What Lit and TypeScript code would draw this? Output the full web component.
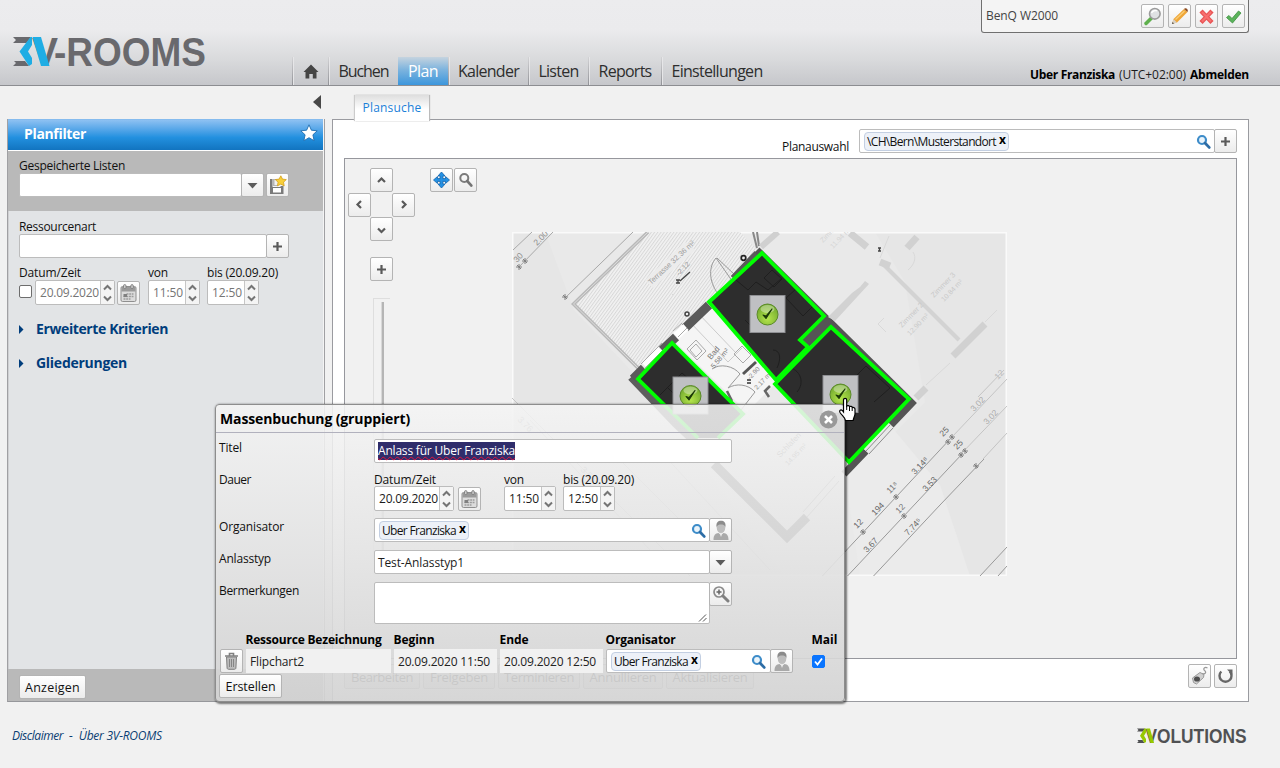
import { LitElement, html, css, svg } from "lit";
import { customElement, property } from "lit/decorators.js";

/** Text run that is tracked so that it fills exactly `w` pixels. */
@customElement("fit-text")
class FitText extends LitElement {
  @property({ type: Number }) w = 0;
  @property() text = "";
  static styles = css`
    :host { display: inline-block; white-space: pre; }
  `;
  updated() {
    const el = this.renderRoot.querySelector("span") as HTMLElement;
    el.style.letterSpacing = "0px";
    const natural = el.getBoundingClientRect().width;
    if (this.w && this.text.length) {
      el.style.letterSpacing = `${(this.w - natural) / this.text.length}px`;
    }
  }
  render() {
    return html`<span>${this.text}</span>`;
  }
}

const t = (text: string, w: number) => html`<fit-text .text=${text} .w=${w}></fit-text>`;

const icon = (w: number, h: number, body: unknown) =>
  html`<svg class="ic" width=${w} height=${h} viewBox="0 0 ${w} ${h}" fill="none">${body}</svg>`;

const plus = icon(11, 11, svg`<path d="M5.5 1v9M1 5.500h9" stroke="#5a5a5a" stroke-width="2.200"/>`);
const caret = icon(11, 7, svg`<path d="M0.500 1h10l-5 5.500z" fill="#5c5c5c"/>`);
const blueSearch = icon(15, 15, svg`
  <circle cx="6" cy="6" r="4" stroke="#3d8cc9" stroke-width="2.200" fill="#eaf4fb"/>
  <path d="M9 9l4.200 4.400" stroke="#2d6da6" stroke-width="2.800" stroke-linecap="round"/>`);
const greySearch = icon(16, 16, svg`
  <circle cx="6.300" cy="6" r="4" stroke="#7c7c7c" stroke-width="2"/>
  <path d="M9.200 9l4.200 4.600" stroke="#747474" stroke-width="2.600" stroke-linecap="round"/>`);
const person = icon(18, 20, svg`
  <path d="M1.500 20c0-5 2-6.500 5-7l2.500 2 2.500-2c3 .5 5 2 5 7z" fill="#a9a9a9"/>
  <path d="M7 12h4l-2 5z" fill="#e9e9e9"/>
  <ellipse cx="9" cy="7.500" rx="4.300" ry="5.500" fill="#bdbdbd"/>
  <path d="M4.500 7C4 2.500 6 .8 9 .8s5 1.700 4.500 6.200C12.500 4.800 11 4.500 9 4.500S5.500 5 4.500 7z" fill="#8b8b8b"/>`);
const calendar = icon(17, 18, svg`
  <rect x="1" y="2.500" width="15" height="15" rx="1.500" fill="#dcdcdc" stroke="#8f8f8f"/>
  <path d="M1.500 3h14v4.500h-14z" fill="#9a9a9a"/>
  <rect x="3.500" y="0.600" width="2.500" height="4" rx="1.200" fill="#ccc" stroke="#777" stroke-width=".8"/>
  <rect x="10.800" y="0.600" width="2.500" height="4" rx="1.200" fill="#ccc" stroke="#777" stroke-width=".8"/>
  <path d="M6.500 10h7M3.500 12.500h10M3.500 15h7" stroke="#9c9c9c" stroke-width="1.500" stroke-dasharray="2 .7"/>
  <rect x="3.500" y="10" width="3.500" height="3" fill="#808080"/>`);
const spin = html`<span class="spin">${icon(9, 18, svg`
  <path d="M1 5.500L4.500 2 8 5.500M1 12.500L4.500 16 8 12.500" stroke="#757575" stroke-width="2"/>`)}</span>`;
const arrow = (d: string) => icon(9, 9, svg`<path d=${d} stroke="#5a5a5a" stroke-width="2.200"/>`);

const badge = (x: number, y: number) => svg`
  <g transform="translate(${x} ${y})">
    <rect x=".5" y=".5" width="35" height="37" fill="#c6c7ca" fill-opacity=".96" stroke="#8f9094"/>
    <circle cx="18" cy="19.500" r="10.500" fill="url(#ball)" stroke="#5a8a28" stroke-width="1"/>
    <ellipse cx="18" cy="14" rx="7" ry="4" fill="#fff" opacity=".35"/>
    <path d="M13.500 20l3 3.500 6-9.500-6 7z" fill="#1c3a08" stroke="#1c3a08" stroke-width="1.100" stroke-linejoin="round"/>
  </g>`;
const tick = (x: number, y: number) =>
  svg`<path d="M${x - 3} ${y}h6M${x} ${y - 3}v6M${x - 2} ${y - 2}l4 4" stroke="#777" stroke-width=".9"/>`;
const dim = (x: number, y: number, s: string, c = "#8a8a8a", size = 8.5, a = -46) =>
  svg`<text transform="translate(${x} ${y}) rotate(${a})" font-size=${size} fill=${c}>${s}</text>`;

const plan = html`<svg class="plan" width="495" height="344" viewBox="512 232 495 344" fill="none">
  <defs>
    <pattern id="hatch" width="2.600" height="8" patternUnits="userSpaceOnUse" patternTransform="rotate(36)">
      <rect width="2.600" height="8" fill="#f2f2f2"/><rect width="1" height="8" fill="#d8d8d8"/>
    </pattern>
    <radialGradient id="ball" cx=".5" cy=".7" r=".7">
      <stop offset="0" stop-color="#b4e54c"/><stop offset="1" stop-color="#6fa62c"/>
    </radialGradient>
  </defs>
  <rect x="512" y="232" width="495" height="344" fill="#e6e6e6"/>
  <path d="M545 232h330l30 50 20 120-40 40 60 60 20 74h-180L640 380l-66-70z" fill="#e9e9e9"/>
  <path d="M845 475l45-50 50 60 30 91h-110z" fill="#ebebeb"/>
  <path d="M512.500 576V232.500h494V575.500h-494" stroke="#fafafa" stroke-width="2"/>
  <path d="M649 232L573.500 304 638 368 709 302 757 250 740 232z" fill="url(#hatch)"/>
  <path d="M648 232L573.500 304 638 368" stroke="#b9b9b9" stroke-width="3.500"/>
  <path d="M648 232L573.500 304 638 368" stroke="#dcdcdc" stroke-width="1"/>
  <path d="M513 250l19-18M519 267l34-35M565 298l68-66" stroke="#a8a8a8"/>
  ${tick(519, 267)}${tick(525, 261)}${tick(565, 297)}
  ${dim(537, 246, "2.00")}${dim(517, 263, "30")}
  <path d="M645 280l40-38 10 8-42 38z" fill="#ececec"/>
  ${dim(651, 285, "Terrasse  32.36 m²", "#a0a0a0", 7.5, -43)}${dim(679, 276, "-2.12", "#999", 7)}
  <path d="M680 281l10-9M676 280h4m-4 3h4m-2-3v3M878 248h3m-3 3h3m-1.500-3v3" stroke="#444" stroke-width="1.300"/>
  <path d="M735 285l-19-27c-7 8-8 22 2 36M735 275l-18-17" stroke="#999"/>
  <path d="M753 232l4 16M757 232l2 14" stroke="#888" stroke-width="2"/>

  <path d="M709 302L673 340l74 72 30-30z" fill="#f5f5f5"/>
  <path d="M688 320l40 42 14-14M697 312l40 42" stroke="#ccc"/>
  <path d="M687 349l9-9 10 11-9 9zM690 350l6-6 6 7-6 6zM734 354l8-8 9 9-8 8z" stroke="#aaa"/>
  <path d="M743 374l13-12" stroke="#555" stroke-width="3"/>
  <path d="M712 369c8-6 22-3 28 5l-12 14M728 388c8-5 20-4 27 4l-14 18" stroke="#999"/>
  <path d="M727 391l5 10M770 386l-5 5 4 6" stroke="#666" stroke-width="2.500"/>
  ${dim(711, 360, "Bad", "#777", 8, -50)}${dim(714, 369, "5.58 m²", "#777", 7, -50)}
  ${dim(750, 380, "-2.90", "#888", 6.5)}${dim(757, 390, "2.17 m²", "#888", 6.5)}
  <path d="M747 380h4m-4 3h4" stroke="#333" stroke-width="1.500"/>

  <path d="M643 372l-9 8 42 44 30 28" stroke="#5e5e5e" stroke-width="8"/>
  <path d="M633 379l11-11M662 350l14-13M685 328l24-23M734 279l24-25" stroke="#5a5a5a" stroke-width="9"/>
  <path d="M645 366l16-16M676 336l10-9" stroke="#fff" stroke-width="8"/>
  <path d="M641 364l21-21M645 368l20-20M673 331l9-8M678 337l9-9" stroke="#aaa"/>
  <path d="M757 250L912 403l-21 22M866 451l-22 23" stroke="#555" stroke-width="7"/>
  <path d="M890 425l-24 26" stroke="#e9e9e9" stroke-width="9"/>
  <path d="M887 422l-24 26M890 425l-24 26M893 428l-24 26" stroke="#8d8d8d"/>
  <path d="M714 464l73 73 20-20" stroke="#5a5a5a" stroke-width="9"/>
  <path d="M807 517l32-36M803 512l32-36" stroke="#999"/>
  <circle cx="743.500" cy="258" r="2.300" stroke="#222" stroke-width="1.700"/>
  <circle cx="687" cy="314" r="2" stroke="#444" stroke-width="1.500"/>
  <path d="M800 340l24-24 7 10-23 22z" fill="#555"/>

  <path d="M709 302L762 253l62 63-24 24 8 7-32 33z" fill="#2d2d2d"/>
  <path d="M775 384l56-57 78 72-60 63z" fill="#2d2d2d"/>
  <path d="M638 379l34-36 71 71-25 24h-20z" fill="#2d2d2d"/>
  <path d="M736 280l12 10 8-8 12 8 14-12M786 298l10-9 17 17-10 10zM745 320l8 8M764 278l8-8 10 9-8 8zM773 350c8 0 8 10 4 18M787 367c14 2 18 16 10 25M852 380l14-14 24 22-16 14M660 395l22-22 18 16M676 380l14 13M668 388l14 14" stroke="#1f1f1f" stroke-width="1"/>
  <path d="M709 302L762 253l62 63-24 24 8 7-32 33z" stroke="#0f0" stroke-width="3.800"/>
  <path d="M775 384l56-57 78 72-60 63z" stroke="#0f0" stroke-width="3.800"/>
  <path d="M698 438l-60-59 34-36 71 71-25 24" stroke="#0f0" stroke-width="3.800"/>

  <path d="M828 317l24-24 8-6 5-6 4 3-34 37z" fill="#d2d2d2"/>
  <path d="M761 247l17-15" stroke="#d0d0d0" stroke-width="6"/>
  <path d="M883 264l76 76" stroke="#d3d3d3" stroke-width="4"/>
  <path d="M880 262l10 4M907 248l10-11M850 233l17 14M953 356l32-32M916 398l10-10" stroke="#d1d1d1" stroke-width="7"/>
  <path d="M880 258l9-22M913 252c4 6 1 13-5 18M926 385l24-22M884 318l-6 6 8 8M985 322l12-12" stroke="#d9d9d9"/>
  ${dim(902, 328, "Zimmer 2", "#c9c9c9", 7.5)}${dim(910, 336, "12.90 m²", "#c9c9c9", 7)}
  ${dim(934, 298, "Zimmer 3", "#c9c9c9", 7.5)}${dim(944, 302, "10.84 m²", "#c9c9c9", 7)}
  ${dim(823, 243, "Zimmer 1", "#d4d4d4", 7)}${dim(833, 249, "11.94 m²", "#d4d4d4", 7)}
  ${dim(974, 412, "3.02", "#aaa")}${dim(987, 425, "3.02", "#aaa")}${dim(998, 380, "12", "#bbb")}
  ${dim(780, 458, "Schlafen", "#666", 8)}${dim(788, 466, "14.95 m²", "#666", 7)}
  <path d="M952 437l55-58M960 455l47-49M983 459l24-26M978 397l26-27" stroke="#c4c4c4"/>
  <path d="M952 437L800 600M963 453L840 584M984 459l-44 46-73 78M980 576l27-29M998 576l9-10" stroke="#999"/>
  ${tick(948, 442)}${tick(952, 437)}${tick(961, 455)}${tick(965, 451)}${tick(976, 466)}
  ${tick(896, 497)}${tick(904, 516)}${tick(863, 532)}
  ${dim(943, 437, "25", "#666")}${dim(957, 450, "25", "#666")}
  ${dim(915, 475, "3.14⁸", "#666")}${dim(926, 492, "3.53", "#666")}${dim(890, 494, "11⁸", "#777")}
  ${dim(875, 516, "194", "#666")}${dim(899, 514, "12", "#777")}${dim(908, 536, "7.74⁵", "#666")}
  ${dim(857, 529, "12", "#666")}${dim(867, 553, "3.67", "#666")}
  <path d="M530 420l120 130M512 398l190 190M600 440l90 90M650 440l120 130" stroke="#c4c4c4"/>
  ${dim(517, 420, "3.76", "#999", 9, 46)}${dim(580, 470, "3.53", "#999", 9, 46)}
  ${badge(749.5, 295)}${badge(672.500, 376.500)}${badge(822.500, 375)}
</svg>`;

@customElement("app-root")
class AppRoot extends LitElement {
  static styles = css`
    * { box-sizing: border-box; }
    :host {
      display: flex; flex-direction: column; position: relative; width: 1280px; height: 768px;
      overflow: hidden; background: #f1f1f1; color: #1c1c1c;
      font: 12px/16px "Open Sans", "Noto Sans", sans-serif;
    }
    svg { display: block; flex: none; }
    fit-text { display: inline-block; }
    header {
      height: 86px; border-bottom: 1px solid #8c8d91; flex: none; display: flex; align-items: flex-end;
      background: linear-gradient(#ececee, #ebebed 35%, #d9dadc 70%, #c6c7cb);
    }
    .logo { margin: 0 0 5px 12px; }
    nav { display: flex; margin-left: 84px; height: 28px; font-size: 16px; line-height: 29px; color: #2e2e2e; }
    nav a { display: flex; justify-content: center; border-left: 1px solid #a2a3a8; border-image: linear-gradient(#d5d5d7, #8f9095) 1; box-shadow: inset 1px 0 #e6e6e8; }
    nav a.on { color: #fff; background: linear-gradient(#c5d3df, #7db4de 45%, #3c96dc); box-shadow: none; border: 0; }
    nav .home { align-items: center; }
    .user { margin: 0 31px 2px auto; display: flex; gap: 4px; font-size: 12px; }
    b { font-weight: 700; color: #000; }
    .device {
      position: absolute; left: 981px; top: 0; width: 268px; height: 33px; display: flex; align-items: center;
      border: 1px solid #707070; border-top: 0; border-radius: 0 0 3px 3px; background: #f4f4f4; padding: 0 3px 0 4px; color: #444;
    }
    .device .acts { margin-left: auto; display: flex; gap: 4px; }
    .btn {
      display: flex; align-items: center; justify-content: center; flex: none; width: 23px; height: 24px;
      border: 1px solid #b4b4b4; border-radius: 2px; background: linear-gradient(#fff, #ececec);
    }
    .text-btn { width: auto; padding: 1px 5px 0; color: #111; font-size: 12.5px; }
    .cols { display: grid; grid-template-columns: 318px 917px; gap: 7px; padding-left: 7px; height: 616px; flex: none; }
    .col { display: flex; flex-direction: column; }
    .strip { height: 33px; flex: none; display: flex; }
    .side .strip { justify-content: flex-end; padding: 9px 4px 0 0; }
    .side .panel { flex: 1; display: flex; flex-direction: column; border: solid #a0a0a3; border-width: 0 1px; background: #e2e4e6; box-shadow: inset -1px 0 #f4f4f4, inset 1px 0 #d0d0d2; }
    .side .head {
      height: 31px; display: flex; align-items: center; justify-content: space-between; padding: 0 5px 1px 16px; margin-right: 1px;
      background: linear-gradient(#7ab4ea 0, #8ec1f2 3%, #53a5e8 35%, #2290df 60%, #1274c0); color: #fff; font: 700 14px/20px "Open Sans", "Noto Sans", sans-serif;
    }
    .side .head svg { margin-top: -3px; }
    .saved { margin: 1px 1px 0 0; height: 60px; background: #b9b9b9; padding: 7px 11px 0; box-shadow: 0 -1px #fff; }
    .row { display: flex; align-items: center; }
    .lab { height: 15px; color: #111; }
    .input { height: 24px; border: 1px solid #bcbcbc; border-radius: 2px; background: #fff; display: flex; align-items: center; }
    .filters { padding: 8px 11px 0; flex: 1; }
    .join { margin-left: -1px; }
    .times { display: grid; grid-template-columns: 129px 59px auto; }
    .field { display: flex; height: 25px; width: 52px; border: 1px solid #bcbcbc; border-radius: 2px; background: #fff; align-items: center; justify-content: space-between; padding-left: 4px; }
    .date { width: 80px; padding-left: 4px; }
    .muted { color: #757575; }
    .spin { width: 14px; height: 100%; border-left: 1px solid #c6c6c6; background: #f4f4f4; display: flex; align-items: center; justify-content: center; }
    .chk { width: 13px; height: 13px; border: 1px solid #6d6d6d; border-radius: 2px; background: #fff; margin: -2px 3px 0 0; }
    .chk.on { background: #0a75ff; border-color: #0a75ff; margin: 0; }
    .acc { display: flex; align-items: center; gap: 12px; height: 34px; color: #003d7c; font: 700 14px/20px "Open Sans", "Noto Sans", sans-serif; }
    .side .foot { height: 32px; background: #b9b9b9; padding: 5px 11px 1px; margin-right: 1px; }
    .side .panel, .main .panel { border-bottom: 1px solid #96979b; }
    .main .strip { padding: 9px 0 0 23px; }
    .tab { height: 26px; width: 74px; z-index: 1; background: linear-gradient(#dedede, #fff 55%); display: flex; align-items: center; justify-content: center; color: #1b80d8; box-shadow: 1px 0 1px #bbb, -1px 0 1px #ccc; }
    .main .panel { flex: 1; border: 1px solid #9a9ba0; background: #fff; display: flex; flex-direction: column; padding: 9px 11px 0; }
    .pick { display: flex; height: 29px; justify-content: flex-end; }
    .pick .lab { padding-top: 10px; margin-right: 10px; }
    .chip { height: 19px; display: flex; align-items: center; gap: 3px; margin-left: 4px; padding: 1px 3px 0 2px; border: 1px solid #c3cfe2; border-radius: 4px; background: #edf1f8; color: #111; }
    .chip b { font-size: 12px; line-height: 14px; margin-top: -4px; }
    .grow { flex: 1; }
    .canvas { position: relative; height: 501px; border: 1px solid #96979d; background: #f1f1f1; flex: none; }
    .plan { position: absolute; left: 167px; top: 73px; font-family: "Liberation Sans", sans-serif; }
    .pad { position: absolute; left: 3px; top: 9px; display: grid; grid-template: repeat(3, 24.5px) / repeat(3, 22px); }
    .pad .up { grid-column: 2; } .pad .lf { grid-area: 2 / 1; } .pad .rt { grid-area: 2 / 3; } .pad .dn { grid-area: 3 / 2; }
    .zoom { position: absolute; left: 25px; top: 98px; display: flex; flex-direction: column; align-items: center; gap: 17px; }
    .track { width: 17px; height: 260px; border: 1px solid #dedede; border-width: 1px 0 0 1px; display: flex; justify-content: center; padding-top: 3px; }
    .track i { width: 3px; background: #b5b5b5; border-left: 1px solid #d8d8d8; }
    .tools { position: absolute; left: 85px; top: 9px; display: flex; gap: 1px; }
    .acts-row { display: flex; gap: 3px; padding-top: 5px; }
    .acts-row .text-btn { color: #333; height: 25px; font-size: 13px; padding: 1px 0 0; }
    footer { display: flex; justify-content: space-between; padding: 26px 33px 0 12px; color: #0a3e73; font-style: italic; }
    .links { display: flex; gap: 6px; }
    .brand { margin-top: -6px; }

    .dialog {
      position: absolute; left: 215px; top: 404px; width: 630px; height: 298px; border: 1px solid #8d8d8d; border-radius: 4px;
      background: linear-gradient(rgba(244,244,244,.87), rgba(228,228,228,.89) 50%, rgba(211,211,211,.92));
      box-shadow: 1px 1px 2px 1px rgba(0,0,0,.5); padding: 0 4px;
    }
    .title { display: flex; justify-content: space-between; align-items: center; height: 28px; margin: 0 -4px; padding: 1px 6px 0 4px; border-bottom: 1px solid #b1b1bd; }
    .title b { font-size: 14px; line-height: 20px; }
    .form { display: grid; grid-template-columns: 154px 358px; grid-template-rows: 32px 47px 32px 32px 48px; padding-top: 6px; }
    .form > .lab { padding-top: 1px; margin-left: -1px; }
    .sel { background: #2f2d6b; color: #fff; margin-left: 3px; height: 18px; line-height: 18px; }
    .sel fit-text { text-decoration: underline wavy #e0143c 1px; text-underline-offset: 1px; text-decoration-skip-ink: none; }
    .form .input > fit-text { padding-top: 1px; }
    .dur .times { grid-template-columns: 130px 59px auto; }
    .dur .lab { height: 14px; }
    .dur { margin-top: 1px; }
    .area { align-items: flex-end; justify-content: flex-end; height: 42px; width: 337px; padding: 1px; }
    .tbl { display: grid; grid-template-columns: 26px 148px 106px 106px 206px auto; }
    .tbl .th { height: 19px; padding-top: 3px; line-height: 14px; margin-left: -.5px; }
    .cell { height: 24px; background: #f1f1f1; padding: 5px 4px 0; margin-right: 3px; color: #222; }
    .create { margin: 1px 0 0 -1px; width: 63px; color: #111; }
    .cursor { position: absolute; left: 838px; top: 397px; }
  `;

  private times(muted: boolean) {
    const m = muted ? "muted" : "";
    return html`<div class="times">
      <div class="lab">${t("Datum/Zeit", 62)}</div><div class="lab">${t("von", 20)}</div><div class="lab">${t("bis (20.09.20)", 71)}</div>
      <div class="row">
        ${muted ? html`<span class="chk"></span>` : ""}
        <div class="field date ${m}">${t("20.09.2020", 59)}${spin}</div>
        <span class="btn" style="margin-left:${muted ? 2 : 4}px">${calendar}</span>
      </div>
      <div class="field ${m}">${t("11:50", 30)}${spin}</div>
      <div class="field ${m}">${t("12:50", 30)}${spin}</div>
    </div>`;
  }

  private chip(text: string, w: number) {
    return html`<span class="chip">${t(text, w)}<b>${t("x", 6)}</b></span>`;
  }

  private nav(label: string, box: number, w: number, on = false) {
    return html`<a class=${on ? "on" : ""} style="width:${box}px">${t(label, w)}</a>`;
  }

  render() {
    return html`
      <header>
        <svg class="logo" width="196" height="54" viewBox="12 26 196 54" font-family="Liberation Sans, sans-serif" font-weight="700" fill="#69696d">
          <path d="M13 37h18l-4.500 6H13l3-3zM13 66l3-3-2-2h11l4 5z"/>
          <path d="M30.500 37H32v8l-4 6.500 4 6.500v6l-3 2-9.500-14.500z" fill="#1fade4"/>
          <text x="32" y="66" font-size="41" textLength="26" lengthAdjust="spacingAndGlyphs">V</text>
          <text x="54" y="66" font-size="41" textLength="152" lengthAdjust="spacingAndGlyphs">-ROOMS</text>
          <path d="M32.500 37H41l8.500 29H41z" fill="#1fade4"/>
        </svg>
        <nav>
          <a class="home" style="width:36px">${icon(16, 15, svg`<path d="M8 .5L15.500 8H13.500v6.500H9.800V10H6.300v4.500H2.500V8H.5z" fill="#454545"/>`)}</a>
          ${this.nav("Buchen", 70, 50)}${this.nav("Plan", 50, 30, true)}${this.nav("Kalender", 80, 61)}${this.nav("Listen", 60, 40)}${this.nav("Reports", 73, 53)}${this.nav("Einstellungen", 111, 91)}
        </nav>
        <div class="user"><b>${t("Uber Franziska", 85)}</b>${t("(UTC+02:00)", 67)}<b>${t("Abmelden", 59)}</b></div>
      </header>
      <div class="device">
        ${t("BenQ W2000", 72)}
        <div class="acts">
          <span class="btn">${icon(19, 19, svg`<path d="M9 10.500L3 16.500" stroke="#5fb04d" stroke-width="3.500" stroke-linecap="round"/><circle cx="11.800" cy="6.800" r="5.300" fill="#dfe1e3" stroke="#9b9b9b" stroke-width="1.600"/><path d="M8.500 6c1-2.500 4-3 5.500-2" stroke="#fff" stroke-width="1.500"/>`)}</span>
          <span class="btn">${icon(19, 19, svg`<path d="M2 17l1.500-5L14 2l3.500 3L7 15.500z" fill="#efa637"/><path d="M2 17l1.500-5L7 15.500z" fill="#d8d0c4"/><path d="M2 17l.6-2 1.400 1.400z" fill="#444"/><path d="M14 2l1-.8c1.500-.4 3 1 2.800 2.800l-.3 1z" fill="#8c4a22"/><path d="M5.500 12.500L14.500 4" stroke="#f9cd77" stroke-width="1.300"/>`)}</span>
          <span class="btn">${icon(17, 17, svg`<path d="M3 3l11 11.500M14 3L3 14.500" stroke="#e85555" stroke-width="4.400"/><path d="M4 4l9 9.500M13 4l-9 9.500" stroke="#f86f6f" stroke-width="2"/>`)}</span>
          <span class="btn">${icon(17, 17, svg`<path d="M1.500 9.500l2.500-2 3 3L13.500 3l2.500 2L7.500 15z" fill="#5bb35b" stroke="#3c8f3f" stroke-width=".8"/>`)}</span>
        </div>
      </div>

      <div class="cols">
        <div class="col side">
          <div class="strip">${icon(8, 14, svg`<path d="M8 0v14L0 7z" fill="#484848"/>`)}</div>
          <div class="panel">
            <div class="head">${t("Planfilter", 62)}${icon(18, 18, svg`<path d="M9 .8l2.400 5.400 5.800.6-4.300 4 1.200 5.900L9 13.700l-5.100 3 1.200-5.900-4.300-4 5.800-.6z" fill="#fff" stroke="#1f6db0" stroke-width=".9"/>`)}</div>
            <div class="saved">
              <div class="lab">${t("Gespeicherte Listen", 106)}</div>
              <div class="row">
                <span class="input" style="width:223px"></span><span class="btn join">${caret}</span>
                <span class="btn" style="margin-left:2px">${icon(19, 20, svg`<path d="M2 4v15h13.500v-8h-3v1h-8V4z" fill="#7a7a7a"/><path d="M4.500 4h5v7h-5z" fill="#b5b5b5"/><path d="M6.500 5v5h4V5z" fill="#f2f2f2"/><rect x="5" y="13" width="8" height="4.500" fill="#fff"/><path d="M12.800.8l1.700 3.300 3.800.5-2.800 2.600.7 3.700-3.400-1.800-3.400 1.800.7-3.700L7.300 4.600l3.800-.5z" fill="#f8cf3a" stroke="#d3a01c" stroke-width=".8"/>`)}</span>
              </div>
            </div>
            <div class="filters">
              <div class="lab">${t("Ressourcenart", 77)}</div>
              <div class="row"><span class="input" style="width:248px"></span><span class="btn join">${plus}</span></div>
              <div style="height:7px"></div>
              ${this.times(true)}
              <div style="height:7px"></div>
              <div class="acc">${icon(5, 9, svg`<path d="M0 0l4.500 4.500L0 9z" fill="#003d7c"/>`)}${t("Erweiterte Kriterien", 132)}</div>
              <div class="acc">${icon(5, 9, svg`<path d="M0 0l4.500 4.500L0 9z" fill="#003d7c"/>`)}${t("Gliederungen", 91)}</div>
            </div>
            <div class="foot row"><span class="btn text-btn">${t("Anzeigen", 55)}</span></div>
          </div>
        </div>

        <div class="col main">
          <div class="strip"><div class="tab">${t("Plansuche", 59)}</div></div>
          <div class="panel">
            <div class="pick">
              <span class="lab">${t("Planauswahl", 67)}</span>
              <span class="input" style="width:356px">${this.chip("\\CH\\Bern\\Musterstandort", 129)}<span class="grow"></span>${blueSearch}<span style="width:3px"></span></span><span class="btn join">${plus}</span>
            </div>
            <div class="canvas">
              ${plan}
              <div class="pad">
                <span class="btn up">${arrow("M1 6L4.500 2.500 8 6")}</span><span class="btn lf">${arrow("M6 1L2.500 4.500 6 8")}</span>
                <span class="btn rt">${arrow("M3 1l3.500 3.500L3 8")}</span><span class="btn dn">${arrow("M1 3.500L4.500 7 8 3.500")}</span>
              </div>
              <div class="zoom"><span class="btn">${plus}</span><div class="track"><i></i></div></div>
              <div class="tools">
                <span class="btn">${icon(17, 18, svg`<path d="M8.500 1l3.500 4H9.900v2.600h2.600V5.500l4 3.500-4 3.500v-2.100H9.900V13H12l-3.500 4L5 13h2.100v-2.600H4.500v2.100L.5 9l4-3.500v2.100h2.600V5H5z" fill="#2491e4" stroke="#1163ab" stroke-width=".8"/>`)}</span>
                <span class="btn">${greySearch}</span>
              </div>
            </div>
            <div class="acts-row">
              ${([["Bearbeiten", 76, 62], ["Freigeben", 72, 58], ["Terminieren", 82, 70], ["Annullieren", 80, 67], ["Aktualisieren", 88, 75]] as [string, number, number][]).map(
                ([s, bw, w]) => html`<span class="btn text-btn" style="width:${bw}px">${t(s, w)}</span>`)}
              <span class="grow"></span>
              <span class="btn">${icon(18, 20, svg`<path d="M1.500 12L9 6.500l4 2-.5 3L5.500 18l-3-1.500z" fill="#cfcfcf" stroke="#999"/><ellipse cx="6" cy="13" rx="3" ry="2.600" fill="#4e4e4e"/><path d="M11 7.500c3 1 5-1 2.500-3-2-2 .5-4 3-2.500" stroke="#999" stroke-width="1.200"/>`)}</span>
              <span class="btn">${icon(17, 17, svg`<path d="M4.300 3.500a6 6 0 1 0 8.400 0" stroke="#666" stroke-width="2.400"/><path d="M10 1.500h5.500V7z" fill="#666"/>`)}</span>
            </div>
          </div>
        </div>
      </div>

      <footer>
        <div class="links">${t("Disclaimer", 51)}<span>-</span>${t("Über 3V-ROOMS", 83)}</div>
        <svg class="brand" width="111" height="28" viewBox="1137 723 111 28" font-family="Liberation Sans, sans-serif" font-weight="700" font-size="20.500" font-style="normal" fill="#505153">
          <path d="M1138 729.500h8l-2 3h-6l1.500-1.500zM1138 744l1.500-1.500-1-1.500h5l2 3z"/>
          <text x="1146.500" y="744" textLength="101" lengthAdjust="spacingAndGlyphs">VOLUTIONS</text>
          <path d="M1145.500 729.500h1.500v4l-2 3.200 2 3.300v3l-1.500 1-4.500-7.300z" fill="#97c800"/>
          <path d="M1147.200 729.500h3.800l4 14.500h-3.500z" fill="#97c800"/>
        </svg>
      </footer>

      <section class="dialog">
        <div class="title"><b>${t("Massenbuchung (gruppiert)", 190)}</b>
          ${icon(19, 19, svg`<circle cx="9.500" cy="9.500" r="9" fill="#999"/><path d="M6 6l7 7M13 6l-7 7" stroke="#fff" stroke-width="2.600"/>`)}
        </div>
        <div class="form">
          <div class="lab">${t("Titel", 23)}</div>
          <div class="input"><span class="sel">${t("Anlass für Uber Franziska", 137)}</span></div>
          <div class="lab">${t("Dauer", 32)}</div>
          <div class="dur">${this.times(false)}</div>
          <div class="lab">${t("Organisator", 65)}</div>
          <div class="row" style="height:24px"><span class="input grow">${this.chip("Uber Franziska", 74)}<span class="grow"></span>${blueSearch}<span style="width:3px"></span></span><span class="btn join">${person}</span></div>
          <div class="lab">${t("Anlasstyp", 52)}</div>
          <div class="row" style="height:24px"><span class="input grow" style="padding-left:3px">${t("Test-Anlasstyp1", 86)}</span><span class="btn join">${caret}</span></div>
          <div class="lab">${t("Bermerkungen", 80)}</div>
          <div class="row" style="align-items:flex-start"><span class="input area">${icon(10, 9, svg`<path d="M1 8.500l7-7M5 8.500l3.500-3.500" stroke="#555" stroke-width="1"/>`)}</span><span class="btn join">${icon(18, 18, svg`<circle cx="7" cy="7" r="5" fill="#f4f4f4" stroke="#8a8a8a" stroke-width="1.700"/><path d="M7 4.500v5M4.500 7h5" stroke="#666" stroke-width="1.500"/><path d="M11 11l5 5" stroke="#808080" stroke-width="3" stroke-linecap="round"/>`)}</span></div>
        </div>
        <div class="tbl">
          <b class="th"></b><b class="th">${t("Ressource Bezeichnung", 136)}</b><b class="th">${t("Beginn", 41)}</b><b class="th">${t("Ende", 29)}</b><b class="th">${t("Organisator", 70)}</b><b class="th">${t("Mail", 26)}</b>
          <span class="btn">${icon(15, 18, svg`<path d="M2.500 5h10l-.6 11c0 .8-.7 1.300-1.500 1.300H4.600c-.8 0-1.500-.5-1.500-1.300z" fill="#bcbcbc" stroke="#808080"/><path d="M1 4h13M5.500 3.500V1.500h4v2" stroke="#808080" stroke-width="1.600"/><path d="M5.500 7v8M7.500 7v8M9.500 7v8" stroke="#858585"/>`)}</span>
          <span class="cell">${t("Flipchart2", 54)}</span>
          <span class="cell">${t("20.09.2020 11:50", 92)}</span>
          <span class="cell">${t("20.09.2020 12:50", 92)}</span>
          <div class="row"><span class="input" style="width:165px">${this.chip("Uber Franziska", 74)}<span class="grow"></span>${blueSearch}<span style="width:4px"></span></span><span class="btn join">${person}</span></div>
          <div class="row"><span class="chk on">${icon(11, 11, svg`<path d="M2 5.500L4.500 8.500 9 2.500" stroke="#fff" stroke-width="1.800"/>`)}</span></div>
        </div>
        <span class="btn text-btn create">${t("Erstellen", 50)}</span>
      </section>
      <svg class="cursor" width="19" height="25" viewBox="0 0 19 25">
        <path d="M5.500 3c0-2.300 3.200-2.300 3.200 0v6c.8-.8 2.600-.5 2.900.6.9-.6 2.400-.2 2.700.9 1.400-.5 2.700.3 2.700 1.700v4.800c0 2-1.500 3.500-1.800 6.500H7.500c-.2-2.500-3-4.500-5.500-8-1.200-2 .8-3.300 2.300-2L5.500 15z" fill="#fff" stroke="#000" stroke-width="1.200"/>
        <path d="M11.500 10v4M14.200 11v3M8.700 9v4" stroke="#000"/>
      </svg>
    `;
  }
}
